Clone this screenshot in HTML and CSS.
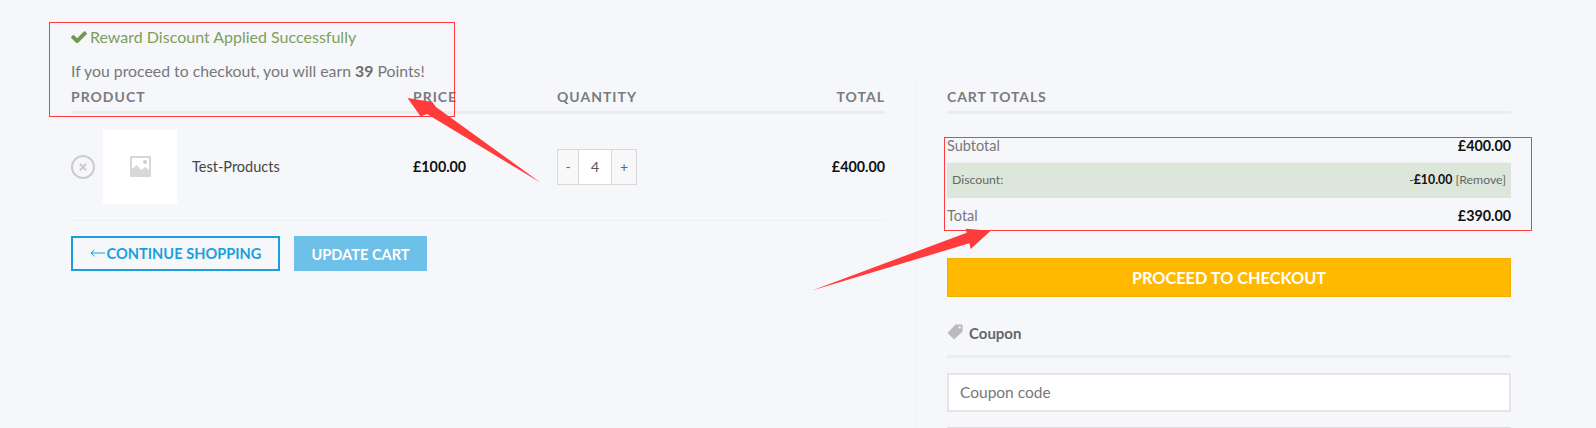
FILE: index.html
```html
<!DOCTYPE html>
<html lang="en">
<head>
<meta charset="utf-8">
<title>Cart</title>
<link rel="stylesheet" href="styles.css">
</head>
<body>
<main class="page">
  <section class="cart">
    <div class="notices">
      <p class="notice-ok"><svg class="check" viewBox="121 362 1550 1060"><path d="M1671 566q0 40-28 68l-724 724-136 136q-28 28-68 28t-68-28l-136-136-362-362q-28-28-28-68t28-68l136-136q28-28 68-28t68 28l294 295 656-657q28-28 68-28t68 28l136 136q28 28 28 68z"/></svg>Reward Discount Applied Successfully</p>
      <p class="notice-earn">If you proceed to checkout, you will earn <strong>39</strong> Points!</p>
    </div>
    <div class="row head">
      <span>PRODUCT</span><span>PRICE</span><span>QUANTITY</span><span class="end">TOTAL</span>
    </div>
    <div class="row item">
      <div class="product">
        <svg class="remove" viewBox="0 0 24 24"><circle cx="12" cy="12" r="11" /><path d="M8.8 8.8l6.4 6.4M15.2 8.8l-6.4 6.4"/></svg>
        <div class="thumb">
          <svg class="placeholder" viewBox="0 0 21 21"><rect width="21" height="21" fill="#d8d8d8"/><path d="M2 2h17v12l-4-3-4 3-4-5-5 4z" fill="#fff"/><circle cx="15" cy="6" r="2" fill="#cfcfcf"/></svg>
        </div>
        <a class="name">Test-Products</a>
      </div>
      <span class="money">£100.00</span>
      <div class="qty"><span class="step">-</span><span class="val">4</span><span class="step plus">+</span></div>
      <span class="money end">£400.00</span>
    </div>
    <div class="actions">
      <a class="btn-outline"><svg class="back" viewBox="0 0 15 8"><path d="M15 4H1M4.5 .8L1 4l3.5 3.2"/></svg><span class="back-label">CONTINUE SHOPPING</span></a>
      <a class="btn-update">UPDATE CART</a>
    </div>
  </section>
  <aside class="side">
    <h2 class="side-title">CART TOTALS</h2>
    <div class="line first"><span>Subtotal</span><span class="money">£400.00</span></div>
    <div class="discount"><span>Discount:</span><span><span class="minus">-<b>£10.00</b></span> [Remove]</span></div>
    <div class="line last"><span>Total</span><span class="money">£390.00</span></div>
    <a class="checkout">PROCEED TO CHECKOUT</a>
    <h3 class="coupon-title"><svg class="tag" viewBox="0 0 16 16"><path fill-rule="evenodd" d="M8.6.4h6a1 1 0 0 1 1 1v6L7 15.6.4 8.9zM12.6 2.2a1.2 1.2 0 1 0 .01 0z"/></svg>Coupon</h3>
    <input class="coupon-input" type="text" placeholder="Coupon code">
    <div class="coupon-rule"></div>
  </aside>
  <svg class="marks" viewBox="0 0 1596 428">
    <rect x="49.5" y="22.5" width="405" height="94"/>
    <rect x="944.5" y="137.5" width="587" height="93"/>
    <polygon points="407.5,98 432.3,102 436,107 540.7,182.7 427,114 420.7,116.5"/>
    <polygon points="990.7,230.7 965.7,228.7 966.7,232.7 812,290.5 969.3,243.3 970.7,249"/>
  </svg>
</main>
</body>
</html>
```

FILE: styles.css
```css
* { box-sizing: border-box; }
html, body { margin: 0; height: 428px; overflow: hidden; }
body { background: #f6f7fb; font-family: Lato, "Liberation Sans", sans-serif; font-size: 16px; color: #777; }
p, h2, h3 { margin: 0; }
.page { position: relative; display: flex; align-items: flex-start; height: 428px; padding-left: 71px; overflow: hidden; }

.cart { width: 814px; }
.notices { height: 84px; padding-top: 27px; }
.notice-ok { height: 20px; line-height: 20px; color: #7d9f5a; }
.check { width: 16px; height: 12px; margin-right: 3px; fill: #6f9a52; }
.notice-earn { margin-top: 14px; height: 20px; line-height: 20px; font-size: 15.8px; color: #777; }
.notice-earn strong { color: #6c6c6c; }

.row { display: grid; grid-template-columns: 342px 144px 1fr auto; align-items: center; }
.end { text-align: right; }
.head { height: 30px; border-bottom: 3px solid #ebecee; padding-bottom: 2px; font-size: 14px; font-weight: 700; letter-spacing: 1px; color: #7b7b7b; }
.item { height: 107px; padding-bottom: 1px; border-bottom: 1px solid #eeeff1; }
.product { display: flex; align-items: center; }
.remove { width: 24px; height: 24px; fill: none; stroke: #ccc; stroke-width: 2; }
.thumb { width: 74px; height: 74px; margin-left: 8px; background: #fff; display: flex; align-items: center; justify-content: center; }
.placeholder { width: 21px; height: 21px; }
.name { margin: 0 0 1px 15px; font-size: 14.5px; color: #444; }
.money { margin-bottom: 1px; font-size: 14.3px; font-weight: 700; color: #111; }
.qty { display: flex; width: 80px; height: 36px; border: 1px solid #d8d8d8; font-size: 14px; }
.qty span { display: flex; align-items: center; justify-content: center; }
.step { width: 20px; background: #f8f8f8; color: #666; }
.plus { width: 24px; }
.val { flex: 1; background: #fff; color: #555; border-left: 1px solid #d8d8d8; border-right: 1px solid #d8d8d8; }

.actions { display: flex; gap: 14px; margin-top: 15px; }
.btn-outline { display: flex; align-items: center; justify-content: center; gap: 2px; width: 209px; height: 35px; padding-bottom: 1px; border: 2px solid #1a9fdc; color: #1a9fdc; font-size: 14.6px; font-weight: 700; }
.back { width: 15px; height: 8px; fill: none; stroke: #1a9fdc; stroke-width: 1; }
.btn-update { display: flex; align-items: center; justify-content: center; width: 133px; height: 35px; padding-top: 1px; background: #6dc0e8; color: #fff; font-size: 14.6px; font-weight: 700; }

.side { width: 595px; margin-left: 31px; margin-top: 82px; padding-left: 30px; height: 346px; border-left: 1px solid #eeeff1; }
.side-title { height: 32px; padding-top: 6px; border-bottom: 3px solid #ebecee; font-size: 14px; font-weight: 700; letter-spacing: .9px; line-height: 18px; color: #7b7b7b; }
.line { display: flex; justify-content: space-between; align-items: center; color: #777; font-size: 14.5px; }
.line .money { margin-bottom: 0; }
.line.first { margin-top: 17px; height: 31px; padding-bottom: 3px; }
.line.last { height: 35px; padding-bottom: 1px; }
.discount { display: flex; justify-content: space-between; align-items: center; height: 36px; padding: 0 5px 2px; background: #dde6da; border-top: 1px solid #eee; font-size: 12.3px; color: #666; }
.minus { color: #444; }
.minus b { color: #111; }
.checkout { display: flex; align-items: center; justify-content: center; height: 39px; margin-top: 25px; padding-bottom: 1px; background: #ffb900; border: 1px solid #f3b000; color: #fff; font-size: 16.3px; font-weight: 700; }
.coupon-title { display: flex; align-items: center; height: 61px; padding: 25px 0 11px; border-bottom: 3px solid #ebecee; font-size: 15px; font-weight: 700; color: #666; }
.tag { width: 16px; height: 16px; margin: -2px 6px 0 0; fill: #bbb; }
.coupon-input { display: block; width: 100%; height: 39px; margin-top: 15px; padding: 0 11px 2px; background: #fff; border: 2px solid #e4e5e7; font: 15.5px Lato, sans-serif; color: #777; outline: none; }
.coupon-input::placeholder { color: #777; opacity: 1; }
.coupon-rule { height: 1px; margin-top: 15px; background: #ddd; }

.marks { position: absolute; left: 0; top: 0; width: 1596px; height: 428px; pointer-events: none; }
.marks rect { fill: none; stroke: #ff3b3b; stroke-width: 1; }
.marks polygon { fill: #ff3b3b; }
```
